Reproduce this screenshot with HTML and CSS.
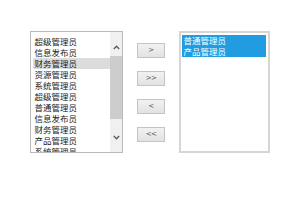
FILE: index.html
```html
<!DOCTYPE html>
<html lang="zh-CN">

<head>
    <meta charset="UTF-8">
    <meta name="viewport" content="width=device-width, initial-scale=1.0">
    <title>角色分配</title>
    <link rel="stylesheet" href="styles.css">
</head>

<body>
    <div class="transfer">
        <!-- Source list -->
        <div class="listbox source">
            <ul class="options">
                <li>超级管理员</li>
                <li>信息发布员</li>
                <li class="active">财务管理员</li>
                <li>资源管理员</li>
                <li>系统管理员</li>
                <li>超级管理员</li>
                <li>普通管理员</li>
                <li>信息发布员</li>
                <li>财务管理员</li>
                <li>产品管理员</li>
                <li>系统管理员</li>
            </ul>
            <div class="scrollbar">
                <div class="scroll-up">
                    <svg width="7" height="5" viewBox="0 0 7 5"><polyline points="0.8,4 3.5,1.2 6.2,4" fill="none" stroke="#5a5a5a" stroke-width="1.3"/></svg>
                </div>
                <div class="scroll-thumb"></div>
                <div class="scroll-track"></div>
                <div class="scroll-down">
                    <svg width="7" height="5" viewBox="0 0 7 5"><polyline points="0.8,1 3.5,3.8 6.2,1" fill="none" stroke="#5a5a5a" stroke-width="1.3"/></svg>
                </div>
            </div>
        </div>

        <!-- Move buttons -->
        <div class="actions">
            <button class="btn">&gt;</button>
            <button class="btn">&gt;&gt;</button>
            <button class="btn">&lt;</button>
            <button class="btn">&lt;&lt;</button>
        </div>

        <!-- Target list -->
        <div class="listbox target">
            <ul class="options">
                <li class="selected">普通管理员</li>
                <li class="selected">产品管理员</li>
            </ul>
        </div>
    </div>
</body>

</html>
```

FILE: styles.css
```css
* {
    margin: 0;
    padding: 0;
    box-sizing: border-box;
}

body {
    background-color: #fff;
    font-family: "Noto Sans CJK SC", "Noto Sans", sans-serif;
    color: #1a1a1a;
}

.transfer {
    display: flex;
    align-items: flex-start;
    padding: 31px 0 0 30px;
}

/* List boxes */
.listbox {
    display: flex;
    height: 122px;
    background-color: #fff;
}

.source {
    width: 93px;
    border: 1px solid #b9b9b9;
}

.target {
    width: 91px;
    border: 2px solid #d6d6d6;
    padding: 2px 2px 0 1px;
}

.options {
    list-style: none;
    flex: 1;
    overflow: hidden;
    font-size: 8.5px;
    line-height: 11px;
}

.source .options {
    padding: 3.5px 0 0 2px;
}

.options li {
    padding-left: 1.5px;
    white-space: nowrap;
}

.options li.active {
    background-color: #dcdcdc;
}

.options li.selected {
    background-color: #229ce0;
    color: #fff;
}

/* Scrollbar */
.scrollbar {
    width: 12px;
    display: flex;
    flex-direction: column;
    background-color: #f0f0f0;
}

.scroll-up,
.scroll-down {
    display: flex;
    justify-content: center;
}

.scroll-up {
    height: 24px;
    align-items: flex-end;
    padding-bottom: 6px;
}

.scroll-thumb {
    height: 63px;
    background-color: #cdcdcd;
}

.scroll-track {
    flex: 1;
}

.scroll-down {
    height: 26px;
    align-items: center;
    padding-bottom: 4px;
}

/* Buttons */
.actions {
    display: flex;
    flex-direction: column;
    gap: 13.5px;
    margin: 12px 14px 0;
}

.btn {
    width: 28px;
    height: 14.5px;
    border: 1px solid #c4c4c4;
    background: linear-gradient(#f2f2f2, #e2e2e2);
    color: #555;
    font-family: "DejaVu Sans", sans-serif;
    font-size: 7px;
    line-height: 12px;
    letter-spacing: -0.5px;
}
```
